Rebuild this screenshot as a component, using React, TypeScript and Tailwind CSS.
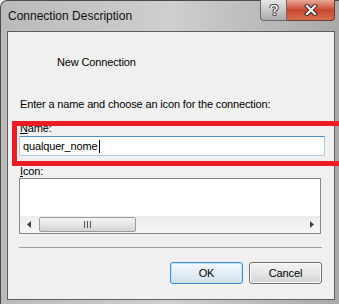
import React from 'react';

const CaptionButtons = () => (
  <div className="absolute right-[4px] top-0 flex">
    <div className="flex h-[21px] w-[27px] items-center justify-center rounded-bl-[4px] border border-t-0 border-[#6b6b6b] bg-gradient-to-b from-[#e6e6e6] via-[#c9c9c9] to-[#a9a9a9]">
      <svg width="10" height="12" viewBox="0 0 10 12">
        <path d="M2 4 Q2 1.5 5 1.5 Q8 1.5 8 4 Q8 5.5 5.5 6.5 L5.5 8" fill="none" stroke="#3a3a3a" strokeWidth="3.4" />
        <path d="M2 4 Q2 1.5 5 1.5 Q8 1.5 8 4 Q8 5.5 5.5 6.5 L5.5 8" fill="none" stroke="#ffffff" strokeWidth="1.6" />
        <rect x="4" y="9" width="3" height="2.5" fill="#ffffff" stroke="#3a3a3a" strokeWidth="0.8" />
      </svg>
    </div>
    <div className="flex h-[21px] w-[48px] items-center justify-center rounded-br-[4px] border border-l-0 border-t-0 border-[#6b3a30] bg-gradient-to-b from-[#e8a799] via-[#c9462f] to-[#d76e52]">
      <svg width="14" height="12" viewBox="0 0 14 12">
        <path d="M3 2 L11 10 M11 2 L3 10" stroke="#3b2a26" strokeWidth="4.2" strokeLinecap="square" />
        <path d="M3 2 L11 10 M11 2 L3 10" stroke="#ffffff" strokeWidth="2.2" strokeLinecap="square" />
      </svg>
    </div>
  </div>
);

const ScrollBar = () => (
  <div className="mt-auto flex h-[17px] items-center bg-gradient-to-b from-[#ececec] to-[#f6f6f6]">
    <div className="flex w-[17px] items-center justify-center">
      <svg width="4" height="7" viewBox="0 0 4 7">
        <path d="M4 0 L0 3.5 L4 7 Z" fill="#404040" />
      </svg>
    </div>
    <div className="ml-[2px] flex h-[15px] w-[97px] items-center justify-center rounded-[2px] border border-[#9a9a9a] bg-gradient-to-b from-[#f4f4f4] via-[#e6e6e6] to-[#d2d2d2]">
      <div className="flex gap-[2px]">
        <div className="h-[7px] w-px bg-[#555]" />
        <div className="h-[7px] w-px bg-[#555]" />
        <div className="h-[7px] w-px bg-[#555]" />
      </div>
    </div>
    <div className="ml-auto flex w-[17px] items-center justify-center">
      <svg width="4" height="7" viewBox="0 0 4 7">
        <path d="M0 0 L4 3.5 L0 7 Z" fill="#404040" />
      </svg>
    </div>
  </div>
);

export default function App() {
  return (
    <div className="relative h-[304px] w-[339px] overflow-hidden bg-white font-['Liberation_Sans',Arial,sans-serif] text-[11px] tracking-[-0.15px] text-black">
      <div className="flex h-full flex-col rounded-tl-[7px] border-l border-t border-[#4b4b4b] bg-gradient-to-r from-[#bababa] via-[#cfcfcf] to-[#a9a9a9]">
        <div className="h-[30px] shrink-0 pl-[7px] pt-[8px] text-[12px] leading-[14px] tracking-normal text-[#111]">
          Connection Description
        </div>
        <CaptionButtons />

        <div className="mb-[4px] ml-[6px] mr-[4px] flex flex-1 flex-col border border-[#5e5e5e] bg-[#f0f0f0]">
          <div className="pl-[49px] pt-[24px] leading-[13px]">New Connection</div>
          <div className="mt-[29px] pl-[12px] leading-[13px]">
            Enter a name and choose an icon for the connection:
          </div>
          <div className="mt-[11px] pl-[12px] leading-[13px]">
            <span className="underline underline-offset-[1px]">N</span>ame:
          </div>
          <div className="ml-[11px] mt-[1px] flex h-[20px] w-[306px] items-center border border-[#a9cbe6] border-t-[#5390c2] bg-white pl-[3px] leading-[13px]">
            qualquer_nome
            <span className="ml-px inline-block h-[13px] w-px bg-black" />
          </div>
          <div className="mt-[9px] pl-[12px] leading-[13px]">
            <span className="underline underline-offset-[1px]">I</span>con:
          </div>
          <div className="ml-[11px] flex h-[56px] w-[302px] flex-col border border-[#828790] bg-white">
            <ScrollBar />
          </div>
          <div className="ml-[11px] mt-[13px] h-px w-[303px] bg-[#a0a0a0]" />
          <div className="mt-[14px] flex justify-end gap-[6px] pr-[12px]">
            <button className="h-[22px] w-[73px] rounded-[3px] border border-[#3c8fd6] bg-gradient-to-b from-[#f4f9fc] via-[#e4eef6] to-[#cfe1ee] leading-[13px] shadow-[inset_0_0_0_1px_#bfe4fa]">
              OK
            </button>
            <button className="h-[22px] w-[73px] rounded-[3px] border border-[#707070] bg-gradient-to-b from-[#f3f3f3] via-[#e6e6e6] to-[#d3d3d3] leading-[13px] shadow-[inset_0_0_0_1px_#fcfcfc]">
              Cancel
            </button>
          </div>
        </div>
      </div>

      <div className="pointer-events-none absolute left-[12px] right-[-10px] top-[121px] h-[45px] border-[5px] border-[#ed1c24]" />
    </div>
  );
}
